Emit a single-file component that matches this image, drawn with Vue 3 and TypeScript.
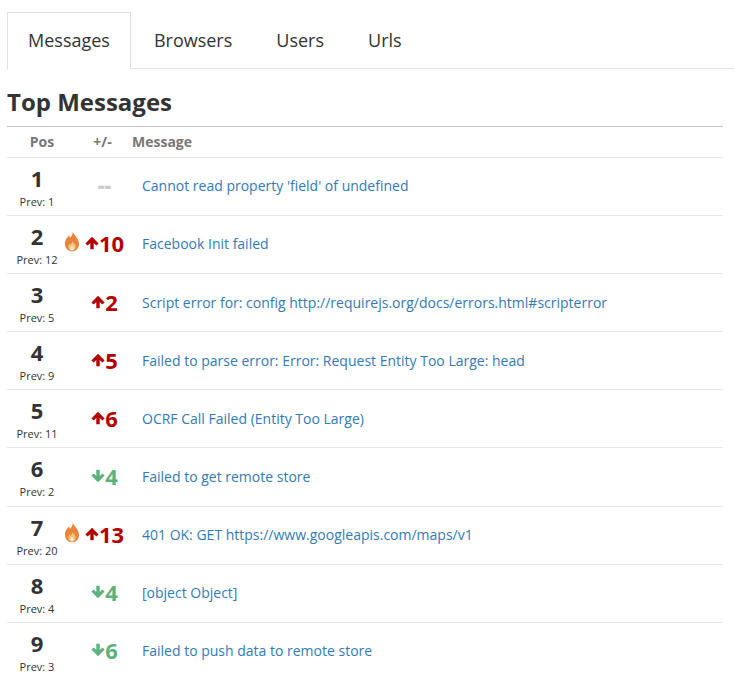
<script setup lang="ts">
interface Row { pos: number; prev: number; delta: number; hot?: boolean; text: string }
const tabs: string[] = ['Messages', 'Browsers', 'Users', 'Urls']
const rows: Row[] = [
  { pos: 1, prev: 1, delta: 0, text: "Cannot read property 'field' of undefined" },
  { pos: 2, prev: 12, delta: 10, hot: true, text: 'Facebook Init failed' },
  { pos: 3, prev: 5, delta: 2, text: 'Script error for: config http://requirejs.org/docs/errors.html#scripterror' },
  { pos: 4, prev: 9, delta: 5, text: 'Failed to parse error: Error: Request Entity Too Large: head' },
  { pos: 5, prev: 11, delta: 6, text: 'OCRF Call Failed (Entity Too Large)' },
  { pos: 6, prev: 2, delta: -4, text: 'Failed to get remote store' },
  { pos: 7, prev: 20, delta: 13, hot: true, text: '401 OK: GET https://www.googleapis.com/maps/v1' },
  { pos: 8, prev: 4, delta: -4, text: '[object Object]' },
  { pos: 9, prev: 3, delta: -6, text: 'Failed to push data to remote store' },
]
</script>

<template>
  <div class="page">
    <ul class="tabs">
      <li v-for="(t, i) in tabs" :key="t" class="tab" :class="{ active: i === 0 }">{{ t }}</li>
    </ul>
    <h2 class="title">Top Messages</h2>
    <div class="table">
      <div class="head">
        <div class="c-pos">Pos</div>
        <div class="c-delta">+/-</div>
        <div class="c-msg">Message</div>
      </div>
      <div v-for="r in rows" :key="r.pos" class="row">
        <div class="c-pos">
          <div class="num">{{ r.pos }}</div>
          <div class="prev">Prev: {{ r.prev }}</div>
        </div>
        <div class="c-delta">
          <div class="delta" :class="r.delta > 0 ? 'up' : r.delta < 0 ? 'down' : 'same'">
            <svg v-if="r.hot" class="flame" viewBox="0 0 16 22" width="16" height="21">
              <path fill="#e8843c" d="M8.6 0.5c.6 3-1 4.6-2.6 6.6-.5-.9-.8-1.6-.9-2.5C2.600 6.600.6 9.500.6 13c0 4.800 3.300 8.300 7.400 8.300s7.400-3.300 7.400-7.700c0-5.600-4.300-8-6.800-13.100z"/>
              <path fill="#f9c27c" d="M8.300 10.500c.2 1.900-1.100 2.600-1.900 4-.3-.4-.5-.8-.6-1.300-1 1-1.600 2.100-1.600 3.500 0 2.300 1.700 3.800 3.800 3.800s3.900-1.500 3.900-3.900c0-2.700-2.400-3.900-3.600-6.100z"/>
              <path fill="#fdeed8" d="M8 15.500c-.9 1-1.700 1.800-1.700 3 0 1 .8 1.700 1.700 1.700s1.800-.7 1.800-1.700c0-1.200-1-1.900-1.800-3z"/>
            </svg>
            <template v-if="r.delta !== 0">
              <svg class="arrow" viewBox="0 0 14 14" width="14" height="14">
                <path v-if="r.delta > 0" fill="currentColor" d="M7 .8 13.600 7.400 11.400 9.600 8.700 6.900V13.200H5.300V6.900L2.600 9.600.4 7.400z"/>
                <path v-else fill="currentColor" d="M7 13.200.4 6.600 2.600 4.400 5.300 7.100V.8H8.700V7.100L11.400 4.400 13.600 6.600z"/>
              </svg>
              <span>{{ Math.abs(r.delta) }}</span>
            </template>
            <span v-else>--</span>
          </div>
        </div>
        <div class="c-msg"><a class="link">{{ r.text }}</a></div>
      </div>
    </div>
  </div>
</template>

<style scoped>
.page {
  box-sizing: border-box;
  width: 734px;
  height: 679px;
  overflow: hidden;
  padding: 12px 11px 0 7px;
  font-family: "Open Sans", "DejaVu Sans", sans-serif;
  color: #333;
}
.tabs {
  display: flex;
  list-style: none;
  margin: 0 -11px 0 0;
  padding: 0;
  height: 57px;
  box-sizing: border-box;
  border-bottom: 1px solid #e5e5e5;
}
.tab {
  box-sizing: border-box;
  height: 57px;
  padding: 14px 20px 0 22px;
  font-size: 18px;
  line-height: 27px;
  border: 1px solid transparent;
  border-bottom: 0;
}
.active {
  background: #fff;
  border-color: #e0e0e0;
  padding-left: 20px;
  padding-right: 20px;
}
.title {
  margin: 16px 0 8px;
  font-size: 24px;
  line-height: 33px;
  font-weight: 700;
  color: #333;
}
.table {
  width: 716px;
  border-top: 1px solid #c4c4c4;
}
.head,
.row {
  display: grid;
  grid-template-columns: 70px 55px 1fr;
  box-sizing: border-box;
  border-bottom: 1px solid #e8e8e8;
  text-align: center;
}
.head {
  height: 30.7px;
  font-size: 14px;
  line-height: 29px;
  font-weight: 700;
  color: #777;
}
.head .c-pos { padding-bottom: 1px; }
.head .c-delta { padding-right: 4px; }
.head .c-msg { text-align: left; }
.row {
  height: 58.15px;
  align-items: center;
}
.row .c-pos { padding-right: 10px; }
.row .c-delta { padding-bottom: 2px; }
.row .c-msg { text-align: left; padding: 0 0 2px 10px; }
.num {
  padding-top: 7px;
  font-size: 22px;
  line-height: 26px;
  font-weight: 700;
  color: #333;
}
.prev {
  margin: 3px 0 6px;
  font-size: 11px;
  line-height: 15px;
  color: #333;
}
.delta {
  display: flex;
  align-items: center;
  justify-content: center;
  position: relative;
  font-size: 22px;
  line-height: 26px;
  font-weight: 700;
}
.arrow { flex: none; }
.flame { position: absolute; left: -13px; top: 1px; }
.up { color: #b30000; }
.down { color: #5cb27c; }
.same { color: #ccc; font-size: 21px; font-weight: 800; }
.link {
  font-size: 14px;
  line-height: 20px;
  color: #337ab7;
}
</style>
